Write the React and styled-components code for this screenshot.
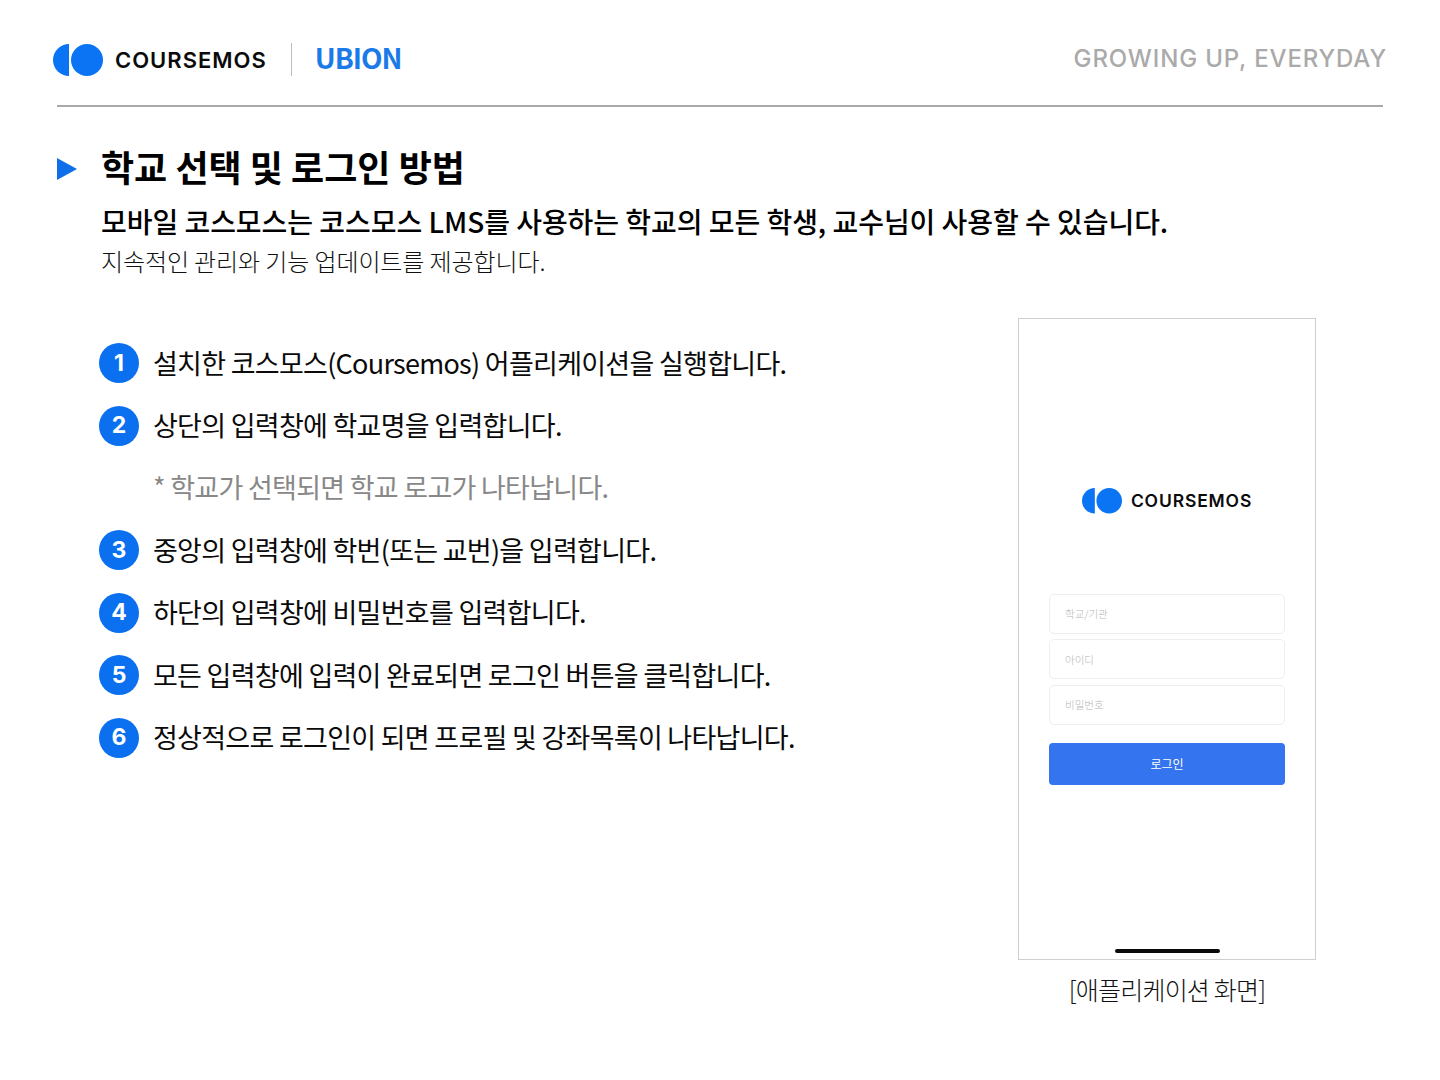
import React from "react";
import styled, { createGlobalStyle } from "styled-components";

const KR = `"Noto Sans CJK KR", "Noto Sans", sans-serif`;

const GlobalStyle = createGlobalStyle`
  html, body { margin: 0; padding: 0; background: #fff; }
  body { font-family: ${KR}; color: #000; }
`;

const Page = styled.div`
  width: 1440px;
  height: 1080px;
  box-sizing: border-box;
  padding: 43px 57px 0 57px;
  overflow: hidden;
`;

const Header = styled.header`
  display: flex;
  align-items: center;
  justify-content: space-between;
  height: 33px;
  margin-left: -4px;
  margin-right: -4px;
  padding-bottom: 29px;
`;

const Brand = styled.div`
  display: flex;
  align-items: center;
`;

const LogoRow = styled.div`
  display: flex;
  align-items: center;
  gap: ${(p) => (p.$small ? "9px" : "12px")};
`;

const LogoText = styled.span`
  font-family: Inter, "Liberation Sans", sans-serif;
  font-weight: 600;
  font-size: ${(p) => (p.$small ? "17.5px" : "22px")};
  letter-spacing: ${(p) => (p.$small ? "0.85px" : "1px")};
  line-height: 1;
  color: #0b0b0b;
`;

const Divider = styled.div`
  width: 1px;
  height: 33px;
  background: #bdbdbd;
  margin: 0 23px 0 24px;
`;

const Ubion = styled.span`
  font-family: ${KR};
  font-weight: 700;
  font-size: 28px;
  letter-spacing: -1px;
  line-height: 1;
  padding-bottom: 5px;
  color: #1a7ae8;
`;

const Slogan = styled.span`
  font-family: Inter, sans-serif;
  font-size: 24px;
  font-weight: 500;
  letter-spacing: 0.85px;
  padding-bottom: 2px;
  color: #aaa;
`;

const Rule = styled.hr`
  border: 0;
  height: 2px;
  margin: 0;
  background: #aaa;
`;

const TitleRow = styled.div`
  display: flex;
  align-items: center;
  gap: 24px;
  margin-top: 36px;
`;

const Triangle = styled.div`
  width: 0;
  height: 0;
  margin-top: 6px;
  border-left: 20px solid #0f6fe8;
  border-top: 11.5px solid transparent;
  border-bottom: 11.5px solid transparent;
`;

const Title = styled.h1`
  margin: 0;
  font-size: 36px;
  line-height: 46px;
  font-weight: 700;
`;

const Intro = styled.div`
  margin-left: 44px;
  margin-top: 11px;
`;

const Lead = styled.p`
  margin: 0 0 1px;
  font-size: 28px;
  line-height: 42px;
  font-weight: 500;
  letter-spacing: -0.04px;
`;

const Sub = styled.p`
  margin: 0;
  font-size: 24px;
  line-height: 36px;
  font-weight: 300;
  letter-spacing: -0.1px;
  color: #111;
`;

const Body = styled.div`
  display: flex;
  justify-content: space-between;
  margin-top: 39px;
  padding-right: 67px;
`;

const Steps = styled.ol`
  list-style: none;
  margin: 13px 0 0 42px;
  padding: 0;
`;

const Step = styled.li`
  display: flex;
  align-items: center;
  gap: 14px;
  height: 62.4px;
`;

const Bullet = styled.span`
  flex: none;
  width: 40px;
  height: 40px;
  margin-top: 2px;
  border-radius: 50%;
  background: #0a70f0;
  color: #fff;
  display: flex;
  align-items: center;
  justify-content: center;
  font-family: Inter, sans-serif;
  font-size: 23px;
  font-weight: 700;
  line-height: 1;
`;

const StepText = styled.span`
  font-size: 27px;
  font-weight: 400;
  letter-spacing: -0.72px;
  color: ${(p) => (p.$muted ? "#888" : "#0a0a0a")};
  margin-left: ${(p) => (p.$muted ? "54px" : "0")};
`;

const Figure = styled.figure`
  margin: 0;
  display: flex;
  flex-direction: column;
  align-items: center;
`;

const Phone = styled.div`
  box-sizing: border-box;
  width: 298px;
  height: 642px;
  border: 1px solid #cfcfcf;
  display: flex;
  flex-direction: column;
  align-items: center;
  padding-top: 169px;
`;

const Form = styled.div`
  display: flex;
  flex-direction: column;
  gap: 5.5px;
  width: 236px;
  margin-top: 80px;
`;

const Field = styled.div`
  box-sizing: border-box;
  height: 40px;
  border: 1px solid #eeeeee;
  border-radius: 5px;
  padding: 0 15px;
  display: flex;
  align-items: center;
  font-size: 10.5px;
  color: #b5b5b5;
  font-weight: 300;
`;

const LoginButton = styled.div`
  height: 42.5px;
  margin-top: 12.5px;
  border-radius: 4px;
  background: #3574ef;
  color: #fff;
  font-size: 12px;
  display: flex;
  align-items: center;
  justify-content: center;
`;

const HomeBar = styled.div`
  width: 105px;
  height: 4px;
  border-radius: 2px;
  background: #0a0a0a;
  margin-top: auto;
  margin-bottom: 6px;
`;

const Caption = styled.figcaption`
  margin-top: 9px;
  font-size: 25px;
  line-height: 40px;
  font-weight: 300;
  letter-spacing: -0.8px;
  color: #111;
`;

function Logo({ size }) {
  return (
    <svg width={size} height={(size * 32) / 50} viewBox="0 0 50 32">
      <path d="M16 0 A16 16 0 0 0 16 32 Z" fill="#0a74f5" />
      <circle cx="34" cy="16" r="16" fill="#0a74f5" />
    </svg>
  );
}

const steps = [
  { n: 1, text: "설치한 코스모스(Coursemos) 어플리케이션을 실행합니다." },
  { n: 2, text: "상단의 입력창에 학교명을 입력합니다." },
  { text: "* 학교가 선택되면 학교 로고가 나타납니다.", muted: true },
  { n: 3, text: "중앙의 입력창에 학번(또는 교번)을 입력합니다." },
  { n: 4, text: "하단의 입력창에 비밀번호를 입력합니다." },
  { n: 5, text: "모든 입력창에 입력이 완료되면 로그인 버튼을 클릭합니다." },
  { n: 6, text: "정상적으로 로그인이 되면 프로필 및 강좌목록이 나타납니다." },
];

export default function App() {
  return (
    <Page>
      <GlobalStyle />
      <Header>
        <Brand>
          <LogoRow>
            <Logo size={50} />
            <LogoText>COURSEMOS</LogoText>
          </LogoRow>
          <Divider />
          <Ubion>UBION</Ubion>
        </Brand>
        <Slogan>GROWING UP, EVERYDAY</Slogan>
      </Header>
      <Rule />

      <TitleRow>
        <Triangle />
        <Title>학교 선택 및 로그인 방법</Title>
      </TitleRow>
      <Intro>
        <Lead>모바일 코스모스는 코스모스 LMS를 사용하는 학교의 모든 학생, 교수님이 사용할 수 있습니다.</Lead>
        <Sub>지속적인 관리와 기능 업데이트를 제공합니다.</Sub>
      </Intro>

      <Body>
        <Steps>
          {steps.map((s) => (
            <Step key={s.text}>
              {s.n && <Bullet>{s.n}</Bullet>}
              <StepText $muted={s.muted}>{s.text}</StepText>
            </Step>
          ))}
        </Steps>
        <Figure>
          <Phone>
            <LogoRow $small>
              <Logo size={40} />
              <LogoText $small>COURSEMOS</LogoText>
            </LogoRow>
            <Form>
              <Field>학교/기관</Field>
              <Field>아이디</Field>
              <Field>비밀번호</Field>
              <LoginButton>로그인</LoginButton>
            </Form>
            <HomeBar />
          </Phone>
          <Caption>[애플리케이션 화면]</Caption>
        </Figure>
      </Body>
    </Page>
  );
}
